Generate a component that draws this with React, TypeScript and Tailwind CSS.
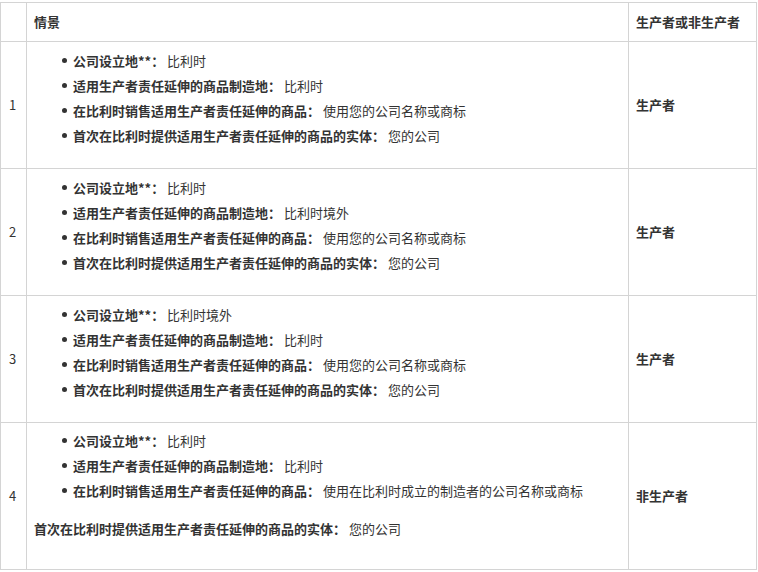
import React from 'react';

const font = { fontFamily: '"Noto Sans CJK SC", "Liberation Sans", sans-serif' };

type Item = [string, string];

const rows: { n: number; items: Item[]; extra?: Item; result: string }[] = [
  {
    n: 1,
    items: [
      ['公司设立地**：', '比利时'],
      ['适用生产者责任延伸的商品制造地：', '比利时'],
      ['在比利时销售适用生产者责任延伸的商品：', '使用您的公司名称或商标'],
      ['首次在比利时提供适用生产者责任延伸的商品的实体：', '您的公司'],
    ],
    result: '生产者',
  },
  {
    n: 2,
    items: [
      ['公司设立地**：', '比利时'],
      ['适用生产者责任延伸的商品制造地：', '比利时境外'],
      ['在比利时销售适用生产者责任延伸的商品：', '使用您的公司名称或商标'],
      ['首次在比利时提供适用生产者责任延伸的商品的实体：', '您的公司'],
    ],
    result: '生产者',
  },
  {
    n: 3,
    items: [
      ['公司设立地**：', '比利时境外'],
      ['适用生产者责任延伸的商品制造地：', '比利时'],
      ['在比利时销售适用生产者责任延伸的商品：', '使用您的公司名称或商标'],
      ['首次在比利时提供适用生产者责任延伸的商品的实体：', '您的公司'],
    ],
    result: '生产者',
  },
  {
    n: 4,
    items: [
      ['公司设立地**：', '比利时'],
      ['适用生产者责任延伸的商品制造地：', '比利时'],
      ['在比利时销售适用生产者责任延伸的商品：', '使用在比利时成立的制造者的公司名称或商标'],
    ],
    extra: ['首次在比利时提供适用生产者责任延伸的商品的实体：', '您的公司'],
    result: '非生产者',
  },
];

const Label = ({ item }: { item: Item }) => (
  <>
    <span className="font-semibold">{item[0]}</span> {item[1]}
  </>
);

export default function App() {
  return (
    <div className="bg-white pt-[2px] text-[13px] text-[#333]" style={font}>
      <table className="w-[757px] border-collapse">
        <thead>
          <tr className="h-[39px]">
            <th className="w-[26px] border border-[#d4d4d4]"></th>
            <th className="border border-[#d4d4d4] px-[7px] text-left font-semibold">情景</th>
            <th className="w-[128px] border border-[#d4d4d4] px-[7px] text-left font-semibold">生产者或非生产者</th>
          </tr>
        </thead>
        <tbody>
          {rows.map((r) => (
            <tr key={r.n} className={r.extra ? 'h-[147px]' : 'h-[127px]'}>
              <td className="border border-[#d4d4d4] px-[8px] align-middle">{r.n}</td>
              <td className="border border-[#d4d4d4] px-[7px] align-top">
                <ul className={r.extra ? 'pt-[5px] pl-[28px]' : 'py-[6px] pl-[28px]'}>
                  {r.items.map((it, i) => (
                    <li key={i} className="flex h-[25px] items-center">
                      <span className="mr-[6px] inline-block h-[5px] w-[5px] rounded-full bg-[#333]"></span>
                      <span><Label item={it} /></span>
                    </li>
                  ))}
                </ul>
                {r.extra && (
                  <p className="mt-[13px] leading-[25px]">
                    <Label item={r.extra} />
                  </p>
                )}
              </td>
              <td className="border border-[#d4d4d4] px-[7px] align-middle font-semibold">{r.result}</td>
            </tr>
          ))}
        </tbody>
      </table>
    </div>
  );
}
